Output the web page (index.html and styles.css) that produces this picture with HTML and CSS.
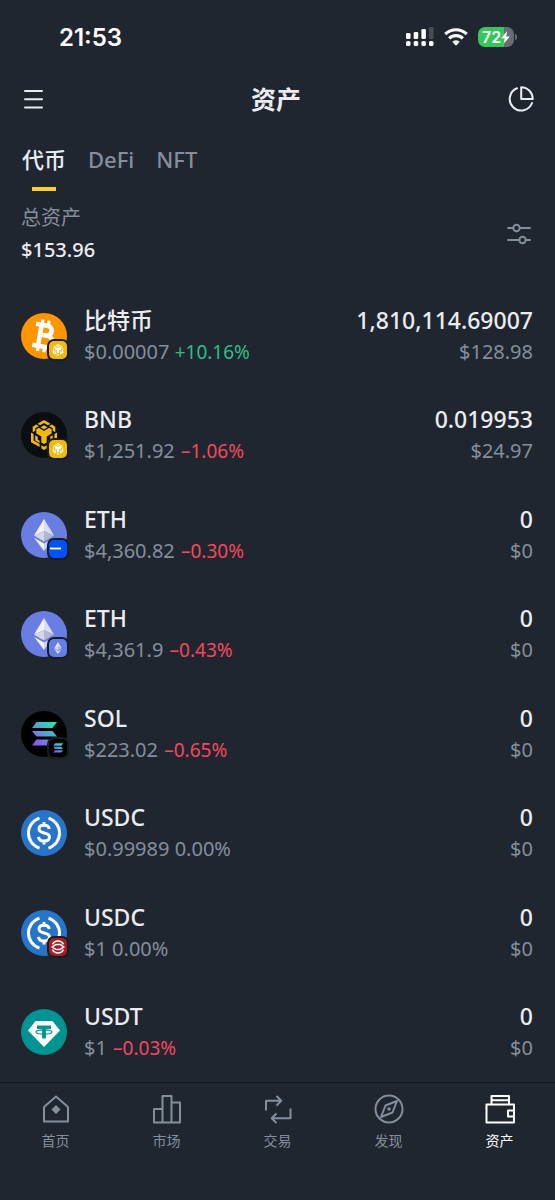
FILE: index.html
```html
<!DOCTYPE html>
<html lang="zh-CN">
<head>
<meta charset="utf-8">
<meta name="viewport" content="width=device-width, initial-scale=1">
<title>资产</title>
<link rel="stylesheet" href="styles.css">
</head>
<body>
<svg class="defs" aria-hidden="true">
  <defs>
    <linearGradient id="sol-a" gradientUnits="userSpaceOnUse" x1="34" y1="10" x2="14" y2="36">
      <stop offset="0" stop-color="#19f5a0"/><stop offset=".5" stop-color="#5b9bd5"/><stop offset="1" stop-color="#9945ff"/>
    </linearGradient>
    <symbol id="cube" viewBox="0 0 28 30">
      <g fill="currentColor">
        <path d="M14 0l6.500 3.800-2.600 1.500L14 3l-3.900 2.300-2.600-1.500z"/>
        <path d="M14 5.300l3.500 2-3.500 2.100-3.500-2.100z"/>
        <path d="M6.200 4.600l2.700 1.500-3.600 2.200v2.500L2.700 12.300V6.700zM21.800 4.600l-2.700 1.500 3.600 2.200v2.500l2.600 1.500V6.700z"/>
        <path d="M6.300 9.300l2.600-1.500L14 10.900l5.100-3.100 2.600 1.500v4.300l-5 3v5.800L14 24l-2.700-1.600v-5.800l-5-3z"/>
        <path d="M1 12.500l2.600 1.500v6.600l6 3.500v3L1 22.200zM27 12.500L24.400 14v6.600l-6 3.500v3l8.600-4.900z"/>
        <path d="M5.200 15.300l2.600 1.500v3l1.800 1v2.300l-4.400-2.600zM22.800 15.300l-2.600 1.500v3l-1.800 1v2.300l4.400-2.600z"/>
        <path d="M11.300 25.200L14 26.800l2.700-1.600v3.100L14 30l-2.700-1.700z"/>
      </g>
    </symbol>
    <symbol id="ether" viewBox="0 0 20 32">
      <path d="M10 0L0 16.500l10-4.300z" fill="#f0f1fb"/>
      <path d="M10 0l10 16.500-10-4.300z" fill="#d9dcf3"/>
      <path d="M0 16.500l10-4.300v10.200z" fill="#d4d7e8"/>
      <path d="M20 16.500l-10-4.300v10.200z" fill="#b4b8ce"/>
      <path d="M0 18.700l10 5.900V32z" fill="#eff0fb"/>
      <path d="M20 18.700l-10 5.900V32z" fill="#cfd3ef"/>
    </symbol>
    <symbol id="solana" viewBox="0 0 46 46">
      <path d="M15.500 11h20.500l-4.500 6H11zM11 20h20.500l4.500 5.500H15.500zM15.500 28.500h20.500l-4.500 6H11z" fill="url(#sol-a)"/>
    </symbol>
    <symbol id="usdc" viewBox="0 0 46 46">
      <circle cx="23" cy="23" r="23" fill="#2775ca"/>
      <g fill="none" stroke="#fff" stroke-width="3">
        <path d="M18.500 8.100a15.700 15.700 0 0 0 0 30M27.500 8.100a15.700 15.700 0 0 1 0 30"/>
        <path d="M28.200 19c-.3-2.600-2.400-3.700-5.100-3.700-3.200 0-5.100 1.400-5.100 3.700 0 5.600 10.500 2.300 10.500 8 0 2.500-2.200 4-5.400 4s-5.400-1.400-5.600-4.200M23 12v3.500M23 30.800v3.700"/>
      </g>
    </symbol>
  </defs>
</svg>

<div class="status">
  <time class="status__time">21:53</time>
  <div class="status__icons">
    <svg width="28" height="20" viewBox="0 0 28 20" fill="#fff">
      <rect x="0" y="6" width="4.500" height="6" rx="1.200"/><rect x="7.700" y="5" width="4.500" height="7" rx="1.200"/><rect x="15.400" y="2" width="4.500" height="10" rx="1.200"/><rect x="23" y="0" width="4.500" height="12" rx="1.200" fill="#474c55"/>
      <rect x="0" y="14" width="4.500" height="5" rx="1.500"/><rect x="7.700" y="14" width="4.500" height="5" rx="1.500"/><rect x="15.400" y="14" width="4.500" height="5" rx="1.500"/><rect x="23" y="14" width="4.500" height="5" rx="1.500"/>
    </svg>
    <svg width="24" height="18" viewBox="0 0 24 18" fill="none" stroke="#fff" stroke-width="3.200">
      <path d="M1.300 6.100a15.300 15.300 0 0 1 21.400 0M5.200 10.400a9.700 9.700 0 0 1 13.600 0"/>
      <path d="M12 17.700l-3.800-3.900a5.500 5.500 0 0 1 7.600 0z" fill="#fff" stroke="none"/>
    </svg>
    <div class="battery">
      <span class="battery__body">72<svg width="9" height="13" viewBox="0 0 8 12" fill="#fff"><path d="M5.500 0L0 6.800h3.200L2.200 12 8 5H4.700z"/></svg></span>
      <span class="battery__cap"></span>
    </div>
  </div>
</div>

<header class="header">
  <button class="icon-btn" aria-label="菜单">
    <svg width="24" height="24" viewBox="0 0 24 24" fill="none" stroke="#eaecef" stroke-width="2" stroke-linecap="round"><path d="M5 4h17M5 12.300h17M5 20.600h17"/></svg>
  </button>
  <h1 class="header__title">资产</h1>
  <button class="icon-btn" aria-label="资产分布">
    <svg width="26" height="26" viewBox="0 0 26 26" fill="none" stroke="#eaecef" stroke-width="2" stroke-linecap="round" stroke-linejoin="round"><path d="M9 2.300A11.500 11.500 0 1 0 24 17M13.200 1.200v11.900h11.500A11.600 11.600 0 0 0 13.200 1.200z"/></svg>
  </button>
</header>

<main class="main">
  <div class="tabs" role="tablist">
    <button class="tab tab--active" role="tab" aria-selected="true">代币</button>
    <button class="tab" role="tab" aria-selected="false">DeFi</button>
    <button class="tab" role="tab" aria-selected="false">NFT</button>
  </div>

  <section class="summary">
    <div>
      <p class="summary__label">总资产</p>
      <p class="summary__value">$153.96</p>
    </div>
    <button class="icon-btn" aria-label="筛选">
      <svg width="26" height="24" viewBox="0 0 26 24" fill="none" stroke="#848e9c" stroke-width="2" stroke-linecap="round"><path d="M1 6h5M13 6h10M1 18h11M19 18h4"/><circle cx="9.500" cy="6" r="3.200"/><circle cx="15.500" cy="18" r="3.200"/></svg>
    </button>
  </section>

  <ul class="tokens">
    <li class="token">
      <span class="coin">
        <svg class="coin__logo" viewBox="0 0 46 46"><circle cx="23" cy="23" r="23" fill="#ff9500"/>
          <g transform="rotate(10 23 23)" fill="none" stroke="#fff" stroke-width="4.600"><path d="M13 12.300h11.500c7 0 7 9.900 0 9.900H18M18 22.200h8c8 0 8 11.500 0 11.500H13M18.800 11v23.500"/><path d="M19.200 7v5M25.500 7v5M19.200 34v5M25.500 34v5" stroke-width="3.200"/></g>
        </svg>
        <span class="coin__badge coin__badge--bnb"><svg width="12" height="12"><use href="#cube"/></svg></span>
      </span>
      <div class="token__info"><h2 class="token__name">比特币</h2><p class="token__sub">$0.00007 <span class="up">+10.16%</span></p></div>
      <div class="token__amount"><p class="token__name">1,810,114.69007</p><p class="token__sub">$128.98</p></div>
    </li>
    <li class="token">
      <span class="coin">
        <svg class="coin__logo coin__logo--gold" viewBox="0 0 46 46"><circle cx="23" cy="23" r="23" fill="#0b0e11"/><use href="#cube" x="9" y="8" width="28" height="30"/></svg>
        <span class="coin__badge coin__badge--bnb"><svg width="12" height="12"><use href="#cube"/></svg></span>
      </span>
      <div class="token__info"><h2 class="token__name">BNB</h2><p class="token__sub">$1,251.92 <span class="down">–1.06%</span></p></div>
      <div class="token__amount"><p class="token__name">0.019953</p><p class="token__sub">$24.97</p></div>
    </li>
    <li class="token">
      <span class="coin">
        <svg class="coin__logo" viewBox="0 0 46 46"><circle cx="23" cy="23" r="23" fill="#6a7de2"/><use href="#ether" x="13" y="7" width="20" height="32"/></svg>
        <span class="coin__badge coin__badge--base"><svg width="18" height="18" viewBox="0 0 18 18"><path d="M1 8.500h11" stroke="#fff" stroke-width="1.800"/></svg></span>
      </span>
      <div class="token__info"><h2 class="token__name">ETH</h2><p class="token__sub">$4,360.82 <span class="down">–0.30%</span></p></div>
      <div class="token__amount"><p class="token__name">0</p><p class="token__sub">$0</p></div>
    </li>
    <li class="token">
      <span class="coin">
        <svg class="coin__logo" viewBox="0 0 46 46"><circle cx="23" cy="23" r="23" fill="#6a7de2"/><use href="#ether" x="13" y="7" width="20" height="32"/></svg>
        <span class="coin__badge coin__badge--eth"><svg width="12" height="12"><use href="#ether"/></svg></span>
      </span>
      <div class="token__info"><h2 class="token__name">ETH</h2><p class="token__sub">$4,361.9 <span class="down">–0.43%</span></p></div>
      <div class="token__amount"><p class="token__name">0</p><p class="token__sub">$0</p></div>
    </li>
    <li class="token">
      <span class="coin">
        <svg class="coin__logo" viewBox="0 0 46 46"><circle cx="23" cy="23" r="23"/><use href="#solana"/></svg>
        <span class="coin__badge coin__badge--sol"><svg width="18" height="18"><use href="#solana"/></svg></span>
      </span>
      <div class="token__info"><h2 class="token__name">SOL</h2><p class="token__sub">$223.02 <span class="down">–0.65%</span></p></div>
      <div class="token__amount"><p class="token__name">0</p><p class="token__sub">$0</p></div>
    </li>
    <li class="token">
      <span class="coin"><svg class="coin__logo"><use href="#usdc"/></svg></span>
      <div class="token__info"><h2 class="token__name">USDC</h2><p class="token__sub">$0.99989 <span>0.00%</span></p></div>
      <div class="token__amount"><p class="token__name">0</p><p class="token__sub">$0</p></div>
    </li>
    <li class="token">
      <span class="coin">
        <svg class="coin__logo"><use href="#usdc"/></svg>
        <span class="coin__badge coin__badge--red"><svg width="14" height="14" viewBox="0 0 14 14" fill="none" stroke="#fff" stroke-width="1.500"><path d="M1.500 4.300A6.200 6.200 0 0 1 12.500 4.300M1.500 9.700a6.200 6.200 0 0 0 11 0M.5 7c2.500 0 2.500 2.500 5 2.500h3c2 0 2-2 4-2M13.500 7c-2.500 0-2.500-2.500-5-2.500h-3c-2 0-2 2-4 2"/></svg></span>
      </span>
      <div class="token__info"><h2 class="token__name">USDC</h2><p class="token__sub">$1 <span>0.00%</span></p></div>
      <div class="token__amount"><p class="token__name">0</p><p class="token__sub">$0</p></div>
    </li>
    <li class="token">
      <span class="coin">
        <svg class="coin__logo" viewBox="0 0 46 46"><circle cx="23" cy="23" r="23" fill="#009393"/><path d="M14.500 12h17L39 21.500 23 38 7 21.500z" fill="#fff"/>
          <path d="M16 16.500h14v3.500h-5.100v9.500h-3.800V20H16z" fill="#009393"/><ellipse cx="23" cy="23" rx="8" ry="2.200" fill="none" stroke="#009393" stroke-width="1.200"/>
        </svg>
      </span>
      <div class="token__info"><h2 class="token__name">USDT</h2><p class="token__sub">$1 <span class="down">–0.03%</span></p></div>
      <div class="token__amount"><p class="token__name">0</p><p class="token__sub">$0</p></div>
    </li>
  </ul>
</main>

<nav class="nav">
  <a class="nav__item" href="#home"><svg class="nav__icon" viewBox="0 0 30 30"><path d="M3 13L15 2.500 27 13v14.500H3z"/><path d="M15 11l4.500 4.500L15 20l-4.500-4.500z" fill="currentColor" stroke="none"/></svg>首页</a>
  <a class="nav__item" href="#market"><svg class="nav__icon" viewBox="0 0 30 30"><path d="M2 15h8.500v13.500H2zM10.500 2h9v26.500h-9zM19.500 8.500H28v20h-8.500z"/></svg>市场</a>
  <a class="nav__item" href="#trade"><svg class="nav__icon" viewBox="0 0 30 30"><path d="M3 16.500V6.800h14M13.500 2l4.800 4.800-4.800 4.800M27.500 14.500v9.800H9.500M13.500 19.500l-4.800 4.800 4.800 4.800"/></svg>交易</a>
  <a class="nav__item" href="#discover"><svg class="nav__icon" viewBox="0 0 30 30"><circle cx="15" cy="15" r="13.500"/><path d="M23 7l-4.500 11.500L7 23l4.500-11.500z"/><circle cx="15" cy="15" r="1.800" fill="currentColor" stroke="none"/></svg>发现</a>
  <a class="nav__item nav__item--active" href="#assets" aria-current="page"><svg class="nav__icon" viewBox="0 0 30 30"><path d="M6.500 10.500V2H24v8.500M6.500 6.200H24M1.500 10.500h27.500v18H1.500zM29 16.500h-6v6h6"/></svg>资产</a>
</nav>
</body>
</html>
```
FILE: styles.css
```css
* { box-sizing: border-box; margin: 0; padding: 0; }

body {
  display: flex;
  flex-direction: column;
  min-height: 100vh;
  background: #202630;
  color: #eaecef;
  font-family: "Noto Sans", "Noto Sans CJK SC", sans-serif;
}

button { border: 0; background: none; color: inherit; font: inherit; cursor: pointer; }
a { color: inherit; text-decoration: none; }
svg { display: block; }
.defs { position: absolute; width: 0; height: 0; }

.status {
  display: flex;
  align-items: center;
  justify-content: space-between;
  height: 74px;
  padding: 0 38px 0 59px;
}
.status__time { padding-top: 2px; font: 600 24px/32px Inter, sans-serif; color: #fff; }
.status__icons { display: flex; align-items: center; gap: 10px; }

.battery { display: flex; align-items: center; gap: 1px; }
.battery__body {
  display: flex;
  align-items: center;
  justify-content: center;
  width: 36px;
  height: 20px;
  border-radius: 7px;
  background: linear-gradient(90deg, #34c759 72%, #676b72 72%);
  color: #fff;
  font: 600 16px/20px Inter, sans-serif;
}
.battery__cap { width: 2px; height: 6px; border-radius: 0 2px 2px 0; background: #676b72; }

.header {
  display: flex;
  align-items: center;
  justify-content: space-between;
  height: 50px;
  padding: 0 21px 0 20px;
}
.header__title { font-size: 25px; line-height: 32px; font-weight: 600; }
.icon-btn { display: flex; }

.main { flex: 1; display: flex; flex-direction: column; padding: 0 22px 0 21px; }

.tabs { display: flex; gap: 22px; padding: 15px 0 0 1px; }
.tab {
  display: flex;
  flex-direction: column;
  align-items: center;
  gap: 8px;
  color: #848e9c;
  font-size: 22px;
  line-height: 40px;
  font-weight: 500;
}
.tab--active { color: #eaecef; }
.tab--active::after { content: ""; width: 24px; height: 4px; background: #f8d12f; }

.summary {
  display: flex;
  align-items: center;
  justify-content: space-between;
  padding: 11px 0 20px;
  font-size: 20px;
  line-height: 32px;
}
.summary__label { color: #848e9c; }
.summary__value { font-weight: 500; }

.tokens { flex: 1; display: flex; flex-direction: column; list-style: none; }
.token { flex: 1; display: flex; align-items: center; gap: 17px; min-height: 80px; }
.token__info { flex: 1; }
.token__amount { text-align: right; }
.token__name { font-size: 23px; line-height: 32px; font-weight: 500; }
.token__sub { font-size: 20px; line-height: 32px; color: #848e9c; }
.up, .down { font-size: 19px; }
.up { color: #2ebd85; }
.down { padding-left: 1px; color: #f6465d; }

.coin { position: relative; width: 46px; height: 46px; }
.coin__logo { width: 46px; height: 46px; }
.coin__logo--gold { color: #f0b90b; }
.coin__badge {
  position: absolute;
  right: 0;
  bottom: 0;
  display: flex;
  align-items: center;
  justify-content: center;
  width: 18px;
  height: 18px;
  border-radius: 5px;
  box-shadow: 0 0 0 2px #181c23;
  color: #fff;
}
.coin__badge--bnb { background: #f0b90b; }
.coin__badge--base { background: #0052ff; }
.coin__badge--eth { background: #627eea; }
.coin__badge--sol { background: #000; }
.coin__badge--red { background: #a81e22; }

.nav {
  display: flex;
  height: 118px;
  padding-top: 11px;
  border-top: 1px solid #12161c;
}
.nav__item {
  flex: 1;
  display: flex;
  flex-direction: column;
  align-items: center;
  gap: 5px;
  color: #848e9c;
  font-size: 14px;
  line-height: 24px;
}
.nav__item--active { color: #fff; }
.nav__icon { width: 30px; height: 30px; fill: none; stroke: currentColor; stroke-width: 2; stroke-linejoin: round; }
```
